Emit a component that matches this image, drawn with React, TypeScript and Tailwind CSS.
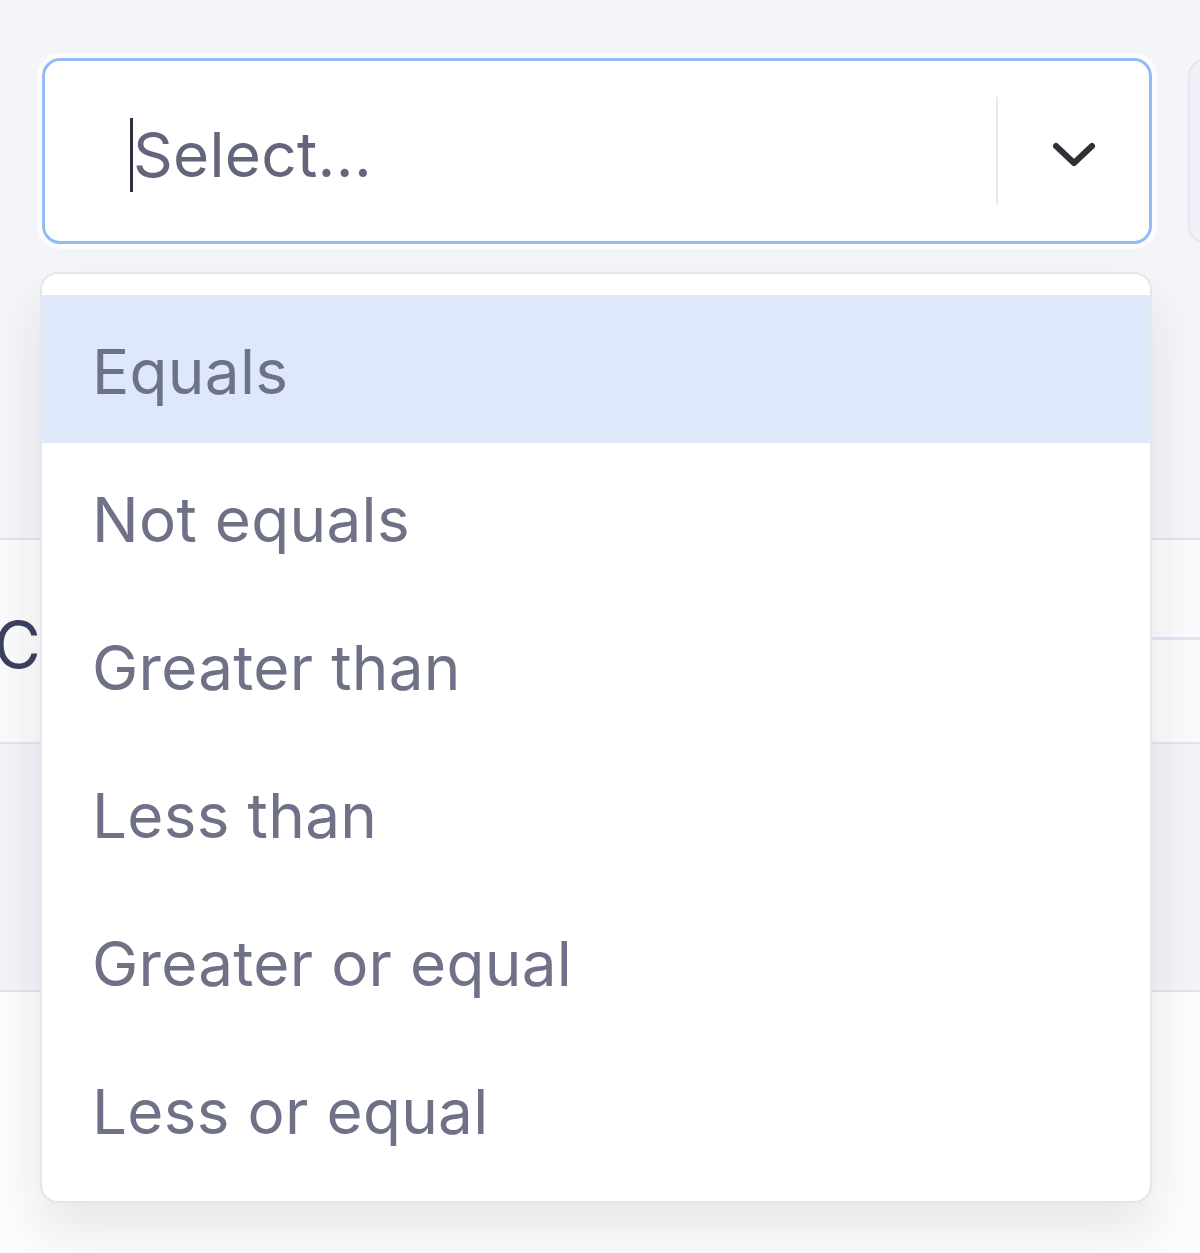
import { useState } from "react";

const options = [
  "Equals",
  "Not equals",
  "Greater than",
  "Less than",
  "Greater or equal",
  "Less or equal",
];

function Chevron() {
  return (
    <svg width="48" height="32" viewBox="0 0 48 32" fill="none">
      <path
        d="M6 8 L24 25 L42 8"
        stroke="#2f3136"
        strokeWidth="6"
        strokeLinecap="round"
        strokeLinejoin="round"
      />
    </svg>
  );
}

export default function App() {
  const [active] = useState(0);

  return (
    <div
      className="relative flex min-h-[1253px] flex-col overflow-hidden bg-[#f4f5f9] text-[#6f7287]"
      style={{ fontFamily: "Inter, 'Noto Sans', sans-serif" }}
    >
      <div className="flex gap-[36px] pl-[42px] pt-[58px]">
        <div className="relative w-[1110px] shrink-0">
          <div className="flex h-[186px] items-center rounded-[18px] border-[3px] border-[#92bdf4] bg-white shadow-[0_0_0_5px_rgba(255,255,255,0.7)]">
            <div className="flex flex-1 items-center pl-[85px] pt-[8px]">
              <span className="h-[74px] w-[3px] bg-[#2e3040]" />
              <span className="text-[62px] leading-none tracking-[0.3px] text-[#63667b]">
                Select...
              </span>
            </div>
            <span className="h-[108px] w-[2px] bg-[#e5e8f6]" />
            <div className="flex w-[151px] items-center justify-center pt-[6px]">
              <Chevron />
            </div>
          </div>

          <div className="absolute left-[-2px] top-[214px] z-10 w-[1112px] rounded-[18px] border-2 border-[#e6e6ea] bg-white pb-[18px] pt-[21px] shadow-[0_28px_48px_rgba(30,30,60,0.09)]">
            {options.map((o, i) => (
              <div
                key={o}
                className={`flex h-[148px] items-center pl-[50px] pt-[5px] text-[62px] leading-none tracking-[0.3px] ${
                  i === active ? "bg-[#dde9fb]" : ""
                }`}
              >
                {o}
              </div>
            ))}
          </div>
        </div>
        <div className="h-[186px] w-[200px] shrink-0 rounded-[18px] border-2 border-[#e4e6f0] bg-[#f0f1f8]" />
      </div>

      <div className="h-[294px]" />
      <div className="flex h-[204px] border-t-2 border-[#e3e4ea] bg-[#fafafc]">
        <div className="flex w-[600px] items-center pt-[8px]">
          <span className="-ml-[6px] text-[64px] leading-none text-[#3c4060]">
            C
          </span>
        </div>
        <div className="flex-1">
          <div className="h-[100px] border-b-[3px] border-[#e6e5f6]" />
        </div>
      </div>
      <div className="h-[248px] border-t-2 border-[#e3e4ea] bg-[#f2f3f8]" />
      <div className="flex-1 border-t-2 border-[#e3e4ea] bg-[#fcfcfd]" />
    </div>
  );
}
